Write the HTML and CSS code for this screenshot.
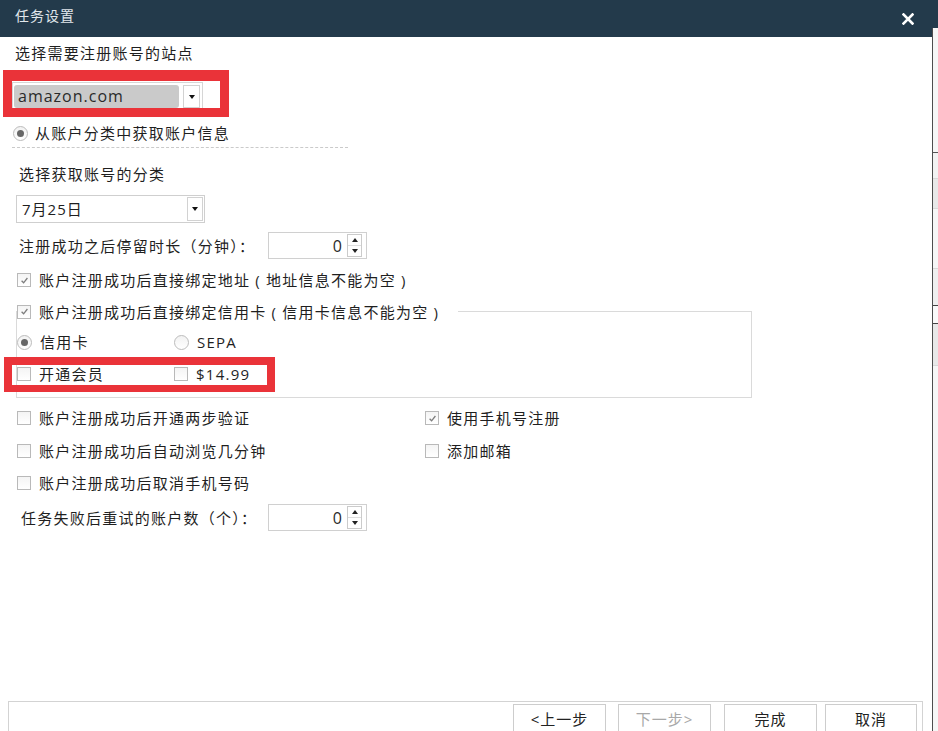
FILE: index.html
```html
<!DOCTYPE html>
<html lang="zh-CN">
<head>
<meta charset="utf-8">
<title>任务设置</title>
<link rel="stylesheet" href="styles.css">
</head>
<body>
<div class="app">
  <div class="dialog">
    <div class="titlebar">
      <span class="title">任务设置</span>
      <svg class="close" width="12" height="12" viewBox="0 0 12 12"><path d="M1.5 1.5 L10.5 10.5 M10.5 1.5 L1.5 10.5" stroke="#ffffff" stroke-width="2.6" stroke-linecap="square"/></svg>
    </div>
    <div class="content">
      <div class="lbl lbl1">选择需要注册账号的站点</div>
      <div class="site">
        <div class="combo combo-site"><span class="combo-val">amazon.com</span><span class="drop"><i class="tri-down"></i></span></div>
        <div class="mark mark-site"></div>
      </div>
      <div class="opt radio-top"><span class="rb on"></span><span>从账户分类中获取账户信息</span></div>
      <div class="dash"></div>
      <div class="lbl lbl2">选择获取账号的分类</div>
      <div class="combo combo-cat"><span class="cat-val">7月25日</span><span class="drop drop-cat"><i class="tri-down"></i></span></div>
      <div class="spin-row spin-row1">
        <span class="spin-lbl">注册成功之后停留时长（分钟）：</span>
        <div class="spin"><span class="spin-val">0</span><span class="spin-btn"><span><i class="tri-up"></i></span><span><i class="tri-dn"></i></span></span></div>
      </div>
      <div class="opt chk-addr"><span class="cb on"><svg width="9" height="9" viewBox="0 0 9 9"><path d="M1.6 4.8 L3.6 6.8 L7.4 2" stroke="#7d7d7d" stroke-width="1.3" fill="none"/></svg></span><span>账户注册成功后直接绑定地址<span class="pa">(</span>地址信息不能为空<span class="pa">)</span></span></div>
      <fieldset class="group">
        <legend class="opt legend"><span class="cb on"><svg width="9" height="9" viewBox="0 0 9 9"><path d="M1.6 4.8 L3.6 6.8 L7.4 2" stroke="#7d7d7d" stroke-width="1.3" fill="none"/></svg></span><span>账户注册成功后直接绑定信用卡<span class="pa">(</span>信用卡信息不能为空<span class="pa">)</span></span></legend>
        <div class="grid-in">
          <div class="opt"><span class="rb on"></span><span>信用卡</span></div>
          <div class="opt"><span class="rb"></span><span>SEPA</span></div>
        </div>
        <div class="grid-in vip">
          <div class="opt"><span class="cb"></span><span>开通会员</span></div>
          <div class="opt"><span class="cb"></span><span>$14.99</span></div>
          <div class="mark mark-vip"></div>
        </div>
      </fieldset>
      <div class="grid-row row-a">
        <div class="opt"><span class="cb"></span><span>账户注册成功后开通两步验证</span></div>
        <div class="opt"><span class="cb on"><svg width="9" height="9" viewBox="0 0 9 9"><path d="M1.6 4.8 L3.6 6.8 L7.4 2" stroke="#7d7d7d" stroke-width="1.3" fill="none"/></svg></span><span>使用手机号注册</span></div>
      </div>
      <div class="grid-row row-b">
        <div class="opt"><span class="cb"></span><span>账户注册成功后自动浏览几分钟</span></div>
        <div class="opt"><span class="cb"></span><span>添加邮箱</span></div>
      </div>
      <div class="grid-row row-c">
        <div class="opt"><span class="cb"></span><span>账户注册成功后取消手机号码</span></div>
      </div>
      <div class="spin-row spin-row2">
        <span class="spin-lbl">任务失败后重试的账户数（个）：</span>
        <div class="spin"><span class="spin-val">0</span><span class="spin-btn"><span><i class="tri-up"></i></span><span><i class="tri-dn"></i></span></span></div>
      </div>
    </div>
    <div class="footer">
      <button class="btn btn-prev">&lt;上一步</button>
      <button class="btn btn-next" disabled>下一步&gt;</button>
      <button class="btn btn-done">完成</button>
      <button class="btn btn-cancel">取消</button>
    </div>
  </div>
  <div class="strip">
    <div class="strip-top"></div>
    <div class="strip-body">
      <div class="seg s1"></div>
      <div class="seg s2"></div>
      <div class="seg s3"></div>
      <div class="seg s4"></div>
      <div class="seg s5"></div>
      <div class="seg s6"></div>
      <div class="seg s7"></div>
      <div class="seg s8"></div>
    </div>
  </div>
</div>
</body>
</html>
```
FILE: styles.css
```css
* { box-sizing: border-box; }
html, body { margin: 0; padding: 0; }
body {
  width: 938px;
  height: 731px;
  overflow: hidden;
  background: #fff;
  font-family: "Open Sans", "Noto Sans CJK SC", sans-serif;
  font-size: 15px;
  letter-spacing: 1.25px;
  color: #1f1f1f;
}
.app { display: flex; height: 731px; }
.dialog {
  width: 932px;
  height: 731px;
  display: flex;
  flex-direction: column;
  overflow: hidden;
  background: #fff;
}
.titlebar {
  flex: none;
  height: 37px;
  background: #233a4b;
  display: flex;
  align-items: flex-start;
  justify-content: space-between;
  padding: 0 18px 0 15px;
}
.title { color: #e1e7eb; font-size: 14px; line-height: 20px; margin-top: 6px; letter-spacing: 1px; }
.close { display: block; margin-top: 13px; }

.content { flex: 1; min-height: 0; padding-top: 6px; }
.lbl { height: 20px; line-height: 20px; }
.lbl1 { margin-left: 15px; }
.lbl2 { margin: 16px 0 0 19px; }

.site { position: relative; margin: 19px 0 0 12px; width: 191px; }
.combo {
  display: flex;
  background: #fff;
  border: 1px solid #d6d6d6;
  height: 28px;
}
.combo-site { width: 191px; padding: 2px 2px 1px 1px; }
.combo-val {
  flex: 1;
  background: #cacaca;
  border-radius: 3px;
  font-size: 16px;
  letter-spacing: 1px;
  line-height: 23px;
  padding-left: 4px;
  color: #2a2a2a;
}
.drop {
  display: flex;
  align-items: center;
  justify-content: center;
  border: 1px solid #d2d2d2;
  background: #fff;
}
.combo-site .drop { margin-left: 4px; width: 17px; }
.tri-down {
  display: block;
  width: 0; height: 0;
  border-left: 3.5px solid transparent;
  border-right: 3.5px solid transparent;
  border-top: 4px solid #111;
}
.combo-cat { width: 189px; margin: 11px 0 0 16px; padding: 1px 1px 1px 5px; border-color: #cfcfcf; }
.cat-val { flex: 1; line-height: 24px; letter-spacing: 1px; }
.drop-cat { width: 16px; }

.mark {
  position: absolute;
  border: 9px solid #ea3339;
  pointer-events: none;
}
.mark-site { left: -9px; top: -12px; width: 226px; height: 47px; border-top-width: 11px; }
.mark-vip { left: -13px; top: -7px; width: 271px; height: 35px; border-width: 8px 8px 7px 8px; }

.opt { display: flex; align-items: center; gap: 8px; height: 20px; line-height: 20px; }
.radio-top { margin: 13px 0 0 13px; gap: 7px; }
.dash { margin: 4px 0 0 12px; width: 336px; border-top: 1px dashed #cacaca; }

.cb {
  flex: none;
  width: 14px; height: 14px;
  border: 1px solid #b9b9b9;
  background: linear-gradient(#f4f4f4, #fff);
  display: flex; align-items: center; justify-content: center;
}
.cb svg { display: block; }
.rb {
  flex: none;
  width: 15px; height: 15px;
  border: 1px solid #bcbcbc;
  border-radius: 50%;
  background: linear-gradient(#f2f2f2, #fff);
  display: flex; align-items: center; justify-content: center;
}
.rb.on::after { content: ""; width: 7px; height: 7px; border-radius: 50%; background: #676767; }
.pa { margin: 0 5px; }

.spin-row { display: flex; align-items: center; }
.spin-row1 { margin: 9px 0 0 19px; }
.spin-row1 .spin-lbl { width: 249px; }
.spin-row2 { margin: 11px 0 0 21px; }
.spin-row2 .spin-lbl { width: 247px; }
.spin-lbl { line-height: 20px; white-space: nowrap; }
.spin {
  width: 99px; height: 27px;
  border: 1px solid #d0d0d0;
  display: flex; align-items: center;
  padding: 1px 4px 1px 0;
}
.spin-val { flex: 1; text-align: right; padding-right: 5px; font-size: 16px; letter-spacing: 0; color: #2a2a2a; }
.spin-btn {
  width: 15px; height: 23px;
  border: 1px solid #cbcbcb;
  display: flex; flex-direction: column;
}
.spin-btn span { flex: 1; display: flex; align-items: center; justify-content: center; }
.spin-btn span + span { border-top: 1px solid #dedede; }
.tri-up { display: block; width: 0; height: 0; border-left: 3px solid transparent; border-right: 3px solid transparent; border-bottom: 4px solid #222; }
.tri-dn { display: block; width: 0; height: 0; border-left: 3px solid transparent; border-right: 3px solid transparent; border-top: 4px solid #222; }

.chk-addr { margin: 11px 0 0 17px; }

.group {
  margin: 11px 0 0 16px;
  width: 736px;
  min-width: 0;
  padding: 10px 0 13px 0;
  border: 1px solid #dadada;
}
.legend { height: 21px; padding: 0 14px 0 0; margin: 0; }
.grid-in { display: grid; grid-template-columns: 157px auto; }
.vip { position: relative; margin-top: 12px; }

.grid-row { display: grid; grid-template-columns: 408px auto; margin-left: 17px; }
.row-a { margin-top: 10px; }
.row-b { margin-top: 13px; }
.row-c { margin-top: 12px; }

.footer {
  flex: none;
  height: 30px;
  margin: 0 9px 0 8px;
  border: 1px solid #d3d3d3;
  border-bottom: 0;
  display: flex;
  justify-content: flex-end;
  align-items: flex-start;
  padding: 2px 5px 0 0;
}
.btn {
  flex: none;
  display: block;
  height: 30px;
  width: 93px;
  padding: 0;
  border: 1px solid #cdcdcd;
  background: #fff;
  font: inherit;
  letter-spacing: 1px;
  line-height: 28px;
  color: #222;
  text-align: center;
}
.btn-prev { margin-right: 12px; }
.btn-next { margin-right: 13px; color: #a8a8a8; }
.btn-done { margin-right: 8px; }
.btn-cancel { width: 92px; }

.strip { width: 6px; display: flex; flex-direction: column; }
.strip-top { height: 28px; background: #233a4b; }
.strip-body { flex: 1; border-left: 1px solid #4d4d4d; display: flex; flex-direction: column; }
.seg { flex: none; border-bottom: 1px solid #d8d8d8; background: #f6f6f6; }
.s1 { height: 125px; border-bottom-color: #555; }
.s2 { height: 26px; background: #f2f2f2; }
.s3 { height: 30px; background: #e8e8e8; }
.s4 { height: 60px; }
.s5 { height: 37px; background: #efefef; border-bottom-color: #444; }
.s6 { height: 18px; background: #fafafa; border-bottom-color: #444; }
.s7 { height: 42px; background: #e8e8e8; }
.s8 { flex: 1; border-bottom: 0; }
```
